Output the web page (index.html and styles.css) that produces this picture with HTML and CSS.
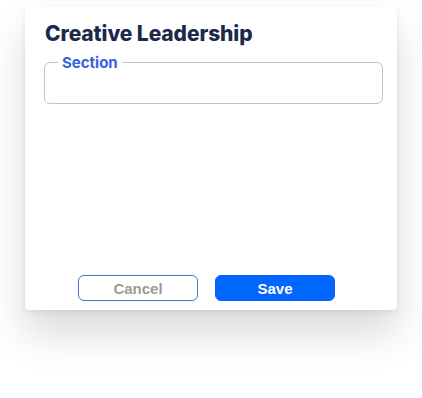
FILE: index.html
```html
<!DOCTYPE html>
<html>
<head>
<meta charset="utf-8">
<link rel="stylesheet" href="styles.css">
</head>
<body>
<div class="card">
  <h1 class="title">Creative Leadership</h1>
  <fieldset class="field">
    <legend class="legend">Section</legend>
  </fieldset>
  <div class="spacer"></div>
  <div class="actions">
    <button class="btn btn-cancel">Cancel</button>
    <button class="btn btn-save">Save</button>
  </div>
</div>
</body>
</html>
```

FILE: styles.css
```css
html, body {
  margin: 0;
  padding: 0;
  background: #ffffff;
}
body {
  width: 422px;
  height: 398px;
  overflow: hidden;
}
.card {
  box-sizing: border-box;
  margin: 7px 0 0 25px;
  width: 372px;
  height: 303px;
  background: #fff;
  border-radius: 4px;
  box-shadow: 0 24px 40px rgba(0,0,0,0.15), 0 2px 6px rgba(0,0,0,0.08);
  padding: 13px 14px 9px 19px;
  display: flex;
  flex-direction: column;
}
.title {
  margin: 0;
  font-family: Inter, "Noto Sans", sans-serif;
  font-weight: 800;
  font-size: 21px;
  line-height: 27px;
  color: #1b2a4a;
  letter-spacing: -0.1px;
  padding-left: 1px;
}
.field {
  margin: 6px 0 0 0;
  padding: 0 12px;
  height: 51px;
  box-sizing: border-box;
  border: 1px solid #c4c4c8;
  border-radius: 6px;
}
.legend {
  padding: 0 4px;
  margin-left: 1px;
  font-family: Inter, "Noto Sans", sans-serif;
  font-weight: 700;
  font-size: 15px;
  color: #3a5fe0;
}
.spacer {
  flex: 1;
}
.actions {
  display: flex;
  justify-content: flex-start;
  gap: 17px;
  padding-left: 34px;
}
.btn {
  box-sizing: border-box;
  width: 120px;
  height: 26px;
  border-radius: 6px;
  font-family: "Liberation Sans", Arial, sans-serif;
  font-size: 15px;
  font-weight: 700;
  padding: 0;
  cursor: pointer;
}
.btn-cancel {
  background: #fff;
  border: 1px solid #4a72d8;
  color: #9a9a9a;
}
.btn-save {
  background: #0066ff;
  border: 1px solid #0066ff;
  color: #fff;
}
```
